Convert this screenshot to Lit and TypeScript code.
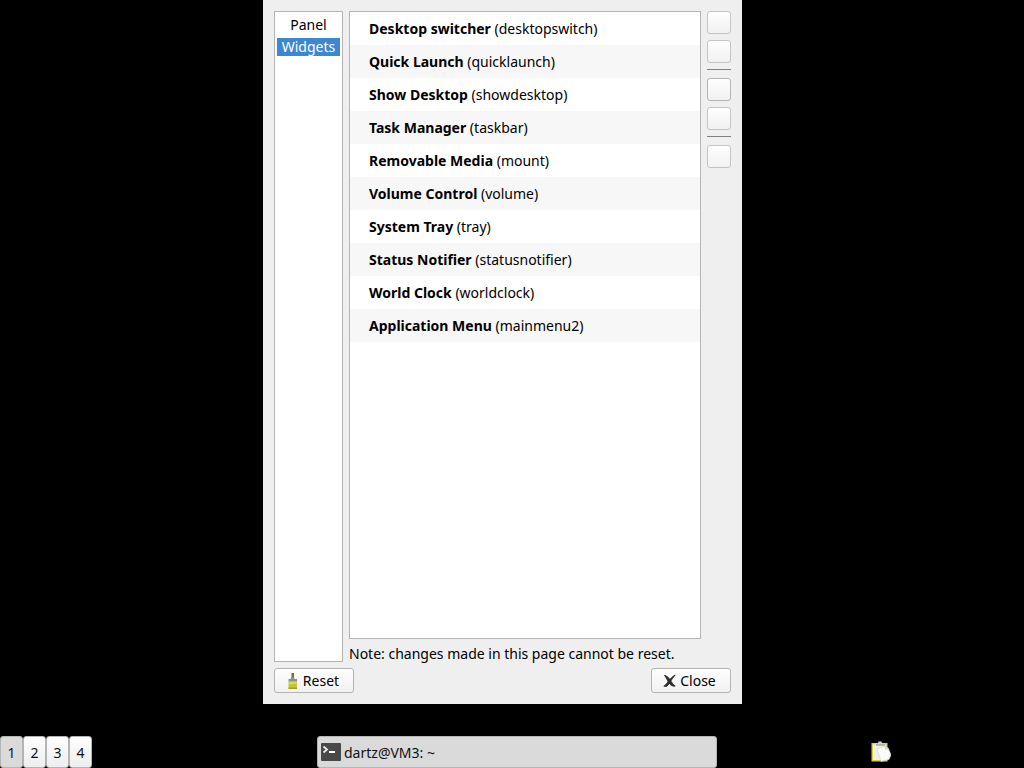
import { LitElement, html, css, svg, nothing } from "lit";
import { customElement, property, state } from "lit/decorators.js";

const WIDGETS: [string, string][] = [
  ["Desktop switcher", "desktopswitch"],
  ["Quick Launch", "quicklaunch"],
  ["Show Desktop", "showdesktop"],
  ["Task Manager", "taskbar"],
  ["Removable Media", "mount"],
  ["Volume Control", "volume"],
  ["System Tray", "tray"],
  ["Status Notifier", "statusnotifier"],
  ["World Clock", "worldclock"],
  ["Application Menu", "mainmenu2"],
];

const broom = html`<svg class="icon" viewBox="0 0 16 16" aria-hidden="true">
  ${svg`
    <path d="M6.5 0h2.500v5H6.500z" fill="#7d6b3e"/>
    <path d="M6 4.500h3l0.500 1.500h2.500v2.500H3.500V6h2z" fill="#8f9088"/>
    <path d="M3.500 8H12v8H3.500z" fill="#c6c534"/>
    <path d="M4 9h7.500v2H4z" fill="#dad95c"/>
    <path d="M3.500 14.500H12V16H3.500z" fill="#a0a032"/>`}
</svg>`;

const cross = html`<svg class="icon" viewBox="0 0 16 16" aria-hidden="true">
  ${svg`
    <path d="M2.500 2.500C5 2.800 6.800 4.800 8.200 7c1.300 2.100 2.600 4.300 5 6-3 0.600-5-1-6.500-3.500C5.400 7.300 4.500 4.800 2.500 2.500z" fill="#2a2d2d" stroke="#2a2d2d"/>
    <path d="M13.200 2C10.300 3.600 8.200 5.800 6.300 8.400 5 10.200 3.700 11.800 1.800 13.200l2.800 0.300c1.500-1.300 2.600-2.900 3.700-4.600C9.900 6.300 11.200 4.300 13.200 2z" fill="#2a2d2d" stroke="#2a2d2d" stroke-width="0.800"/>`}
</svg>`;

@customElement("config-dialog")
class ConfigDialog extends LitElement {
  @state() private page = "Widgets";

  static styles = css`
    :host {
      display: flex;
      flex-direction: column;
      box-sizing: border-box;
      gap: 6px;
      padding: 11px;
      background: #efefef;
      color: #000;
    }
    button {
      font: inherit;
      color: inherit;
      box-sizing: border-box;
      margin: 0;
      border: 1px solid #b4b4b4;
      border-radius: 3px;
      background: linear-gradient(#fefefe, #f1f1f1);
    }
    .body {
      flex: 1;
      min-height: 0;
      display: flex;
      gap: 6px;
    }
    .pages,
    .list {
      margin: 0;
      padding: 0;
      list-style: none;
      box-sizing: border-box;
      background: #fff;
      border: 1px solid #b4b4b4;
    }
    .pages {
      flex: none;
      width: 69px;
      padding: 4px 2px;
      display: flex;
      flex-direction: column;
      gap: 4px;
    }
    .pages button {
      display: block;
      width: 100%;
      height: 18px;
      line-height: 18px;
      padding: 0;
      border: 0;
      border-radius: 0;
      background: none;
      text-align: center;
    }
    .pages .current {
      background: #3c87d2;
      color: #fff;
    }
    .content {
      flex: 1;
      min-width: 0;
      display: flex;
      flex-direction: column;
    }
    .columns {
      flex: 1;
      min-height: 0;
      display: flex;
      gap: 6px;
    }
    .list {
      flex: 1;
      min-width: 0;
      overflow: hidden;
    }
    .list li {
      height: 33px;
      line-height: 33px;
      padding-left: 19px;
      white-space: nowrap;
    }
    .list li:nth-child(even) {
      background: #f7f7f7;
    }
    .tools {
      flex: none;
      width: 24px;
      display: flex;
      flex-direction: column;
      gap: 6px;
    }
    .tools button {
      width: 24px;
      height: 23px;
      padding: 0;
    }
    .tools button:disabled {
      border-color: #c4c4c4;
    }
    .tools hr {
      width: 100%;
      height: 1px;
      margin: 0 0 2px;
      border: 0;
      background: #808080;
    }
    .note {
      margin: 0;
      height: 23px;
      line-height: 30px;
      white-space: nowrap;
    }
    .actions {
      display: flex;
      justify-content: space-between;
    }
    .actions button {
      width: 80px;
      height: 25px;
      padding: 0 4px 0 0;
      display: flex;
      align-items: center;
      justify-content: center;
      gap: 2px;
    }
    .icon {
      width: 16px;
      height: 16px;
    }
  `;

  render() {
    return html`
      <div class="body">
        <nav class="pages" aria-label="Pages">
          ${["Panel", "Widgets"].map(
            (p) => html`<button
              type="button"
              class=${p === this.page ? "current" : nothing}
              @click=${() => (this.page = p)}
            >${p}</button>`
          )}
        </nav>
        <section class="content">
          <div class="columns">
            <ul class="list">
              ${WIDGETS.map(([name, id]) => html`<li><b>${name}</b> (${id})</li>`)}
            </ul>
            <div class="tools">
              <button type="button" aria-label="Move up" disabled></button>
              <button type="button" aria-label="Move down" disabled></button>
              <hr />
              <button type="button" aria-label="Add"></button>
              <button type="button" aria-label="Remove" disabled></button>
              <hr />
              <button type="button" aria-label="Configure" disabled></button>
            </div>
          </div>
          <p class="note">Note: changes made in this page cannot be reset.</p>
        </section>
      </div>
      <div class="actions">
        <button type="button">${broom}Reset</button>
        <button type="button">${cross}Close</button>
      </div>
    `;
  }
}

@customElement("desktop-panel")
class DesktopPanel extends LitElement {
  @property({ type: Number }) desktop = 1;

  static styles = css`
    :host {
      display: grid;
      grid-template-columns: 317fr 400fr 307fr;
      height: 32px;
    }
    button {
      font: inherit;
      color: #111;
      box-sizing: border-box;
      margin: 0;
      padding: 0;
      height: 32px;
      border: 1px solid #b4b4b4;
      border-radius: 3px;
      background: linear-gradient(#fdfdfd, #eeeeee);
    }
    .pager {
      display: flex;
    }
    .pager button {
      width: 23px;
    }
    .pager .current,
    .task {
      background: #dadada;
    }
    .task {
      display: flex;
      align-items: center;
      gap: 3px;
      padding: 0 3px;
      text-align: left;
    }
    .tray {
      display: flex;
      align-items: center;
      justify-content: center;
      padding-left: 20px;
    }
    .tray button {
      height: 22px;
      border: 0;
      background: none;
    }
    svg {
      display: block;
    }
  `;

  render() {
    return html`
      <div class="pager">
        ${[1, 2, 3, 4].map(
          (n) => html`<button
            type="button"
            class=${n === this.desktop ? "current" : nothing}
            @click=${() => (this.desktop = n)}
          >${n}</button>`
        )}
      </div>
      <button type="button" class="task">
        <svg width="20" height="20" viewBox="0 0 20 20" aria-hidden="true">
          <rect y="1" width="20" height="18" rx="1" fill="#484848" />
          <path d="M2.500 4.500L6 7.500 2.500 10.500" fill="none" stroke="#e8e8e8" stroke-width="1.800" />
          <path d="M8 10h6" stroke="#fff" stroke-width="2" />
        </svg>
        <span>dartz@VM3: ~</span>
      </button>
      <div class="tray">
        <button type="button" aria-label="Clipboard">
          <svg width="20" height="22" viewBox="0 0 20 22" aria-hidden="true">
            <path d="M0.500 2h16v18.500h-16z" fill="#d3d14d" />
            <path d="M2 3.500h13v15.500H2z" fill="#f2f1dc" />
            <path d="M5 4V2h2l0.500-1.500h3L11 2h3v2z" fill="#d5d5d5" />
            <path d="M5 4h9" stroke="#8a8a8a" />
            <path d="M6 8l8-3L17.500 7.500 20 14l-2 4.500-8 2z" fill="#fafafa" stroke="#cfcfcf" stroke-width="0.600" />
            <path d="M14 5l0.800 3.500 2.700-1" fill="#ddd" stroke="#bbb" stroke-width="0.500" />
          </svg>
        </button>
      </div>
    `;
  }
}

@customElement("app-root")
class AppRoot extends LitElement {
  static styles = css`
    :host {
      display: flex;
      flex-direction: column;
      height: 100vh;
      overflow: hidden;
      background: #000;
      font: 14px "Noto Sans", "Open Sans", sans-serif;
    }
    .desktop {
      flex: 1;
      min-height: 0;
      display: flex;
      justify-content: center;
      padding: 0 19px 32px 0;
    }
    .window {
      width: 479px;
      max-width: 100%;
    }
  `;

  render() {
    return html`
      <main class="desktop"><config-dialog class="window"></config-dialog></main>
      <desktop-panel></desktop-panel>
    `;
  }
}
